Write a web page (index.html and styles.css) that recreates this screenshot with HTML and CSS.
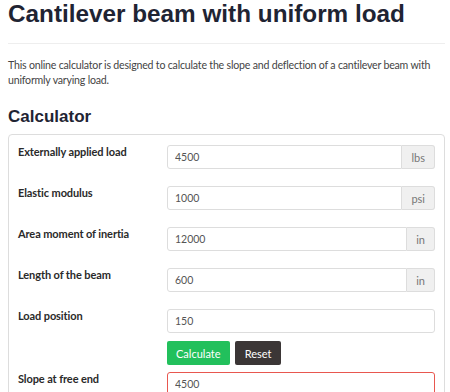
FILE: index.html
```html
<!DOCTYPE html>
<html lang="en">
<head>
  <meta charset="UTF-8" />
  <meta name="viewport" content="width=device-width, initial-scale=1.0"/>
  <title>Cantilever beam with uniform load</title>
  <link rel="stylesheet" href="styles.css">
</head>
<body>
  <div class="page">
    <h1>Cantilever beam with uniform load</h1>
    <hr />
    <p class="intro">This online calculator is designed to calculate the slope and deflection of a cantilever beam with uniformly varying load.</p>
    <h2>Calculator</h2>
    <div class="card">
      <div class="row">
        <label for="load">Externally applied load</label>
        <div class="group">
          <input type="text" id="load" value="4500" />
          <span class="addon">lbs</span>
        </div>
      </div>
      <div class="row">
        <label for="modulus">Elastic modulus</label>
        <div class="group">
          <input type="text" id="modulus" value="1000" />
          <span class="addon">psi</span>
        </div>
      </div>
      <div class="row">
        <label for="inertia">Area moment of inertia</label>
        <div class="group">
          <input type="text" id="inertia" value="12000" />
          <span class="addon">in</span>
        </div>
      </div>
      <div class="row">
        <label for="length">Length of the beam</label>
        <div class="group">
          <input type="text" id="length" value="600" />
          <span class="addon">in</span>
        </div>
      </div>
      <div class="row tight">
        <label for="position">Load position</label>
        <div class="group">
          <input type="text" id="position" value="150" />
        </div>
      </div>
      <div class="row buttons">
        <span></span>
        <div>
          <button class="btn calc">Calculate</button>
          <button class="btn reset">Reset</button>
        </div>
      </div>
      <div class="row">
        <label for="slope">Slope at free end</label>
        <div class="group">
          <input type="text" id="slope" class="result" value="4500" />
        </div>
      </div>
    </div>
  </div>
</body>
</html>
```

FILE: styles.css
```css
body { margin: 0; font-family: Lato, "Open Sans", sans-serif; color: #333; background: #fff; }
.page { padding: 0 5px 0 8px; }
h1 {
  font-family: "Liberation Sans", Arial, sans-serif; font-size: 24.3px; line-height: 28px;
  margin: 0; color: #1f2433;
}
hr { border: none; border-top: 1px solid #eee; margin: 15px 0 0; }
.intro { font-size: 10.6px; letter-spacing: -0.2px; line-height: 15px; color: #444; margin: 14px 0 0; }
h2 {
  font-family: "Liberation Sans", Arial, sans-serif; font-size: 17px; line-height: 20px;
  margin: 19px 0 0; color: #1f2433;
}
.card {
  margin-top: 7px; padding: 10px 9px 20px 9px;
  border: 1px solid #ddd; border-radius: 4px; box-sizing: border-box;
}
.row { display: grid; grid-template-columns: 149px 1fr; margin-bottom: 17px; }
.row.tight { margin-bottom: 8px; }
.row.buttons { margin-bottom: 7px; }
label { font-size: 11px; letter-spacing: -0.1px; font-weight: bold; line-height: 14px; color: #2a2a2a; }
.group { display: flex; height: 24px; }
input {
  flex: 1; min-width: 0; height: 24px; box-sizing: border-box;
  border: 1px solid #ddd; border-radius: 3px; padding: 0 7px;
  font-family: Lato, sans-serif; font-size: 10.5px; color: #555;
}
.group input:not(:last-child) { border-radius: 3px 0 0 3px; }
.addon {
  display: flex; align-items: center; padding: 0 9px;
  background: #f0f0f0; border: 1px solid #ddd; border-left: none;
  border-radius: 0 3px 3px 0; font-size: 11px; color: #777;
}
input.result { border-color: #e8574f; }
.btn {
  height: 24px; border: none; border-radius: 2px; padding: 0 9px;
  font-family: Lato, sans-serif; font-size: 11px; color: #fff; cursor: pointer;
}
.calc { background: #22c05c; }
.reset { background: #3b3636; margin-left: 1px; padding: 0 10px; }
```
